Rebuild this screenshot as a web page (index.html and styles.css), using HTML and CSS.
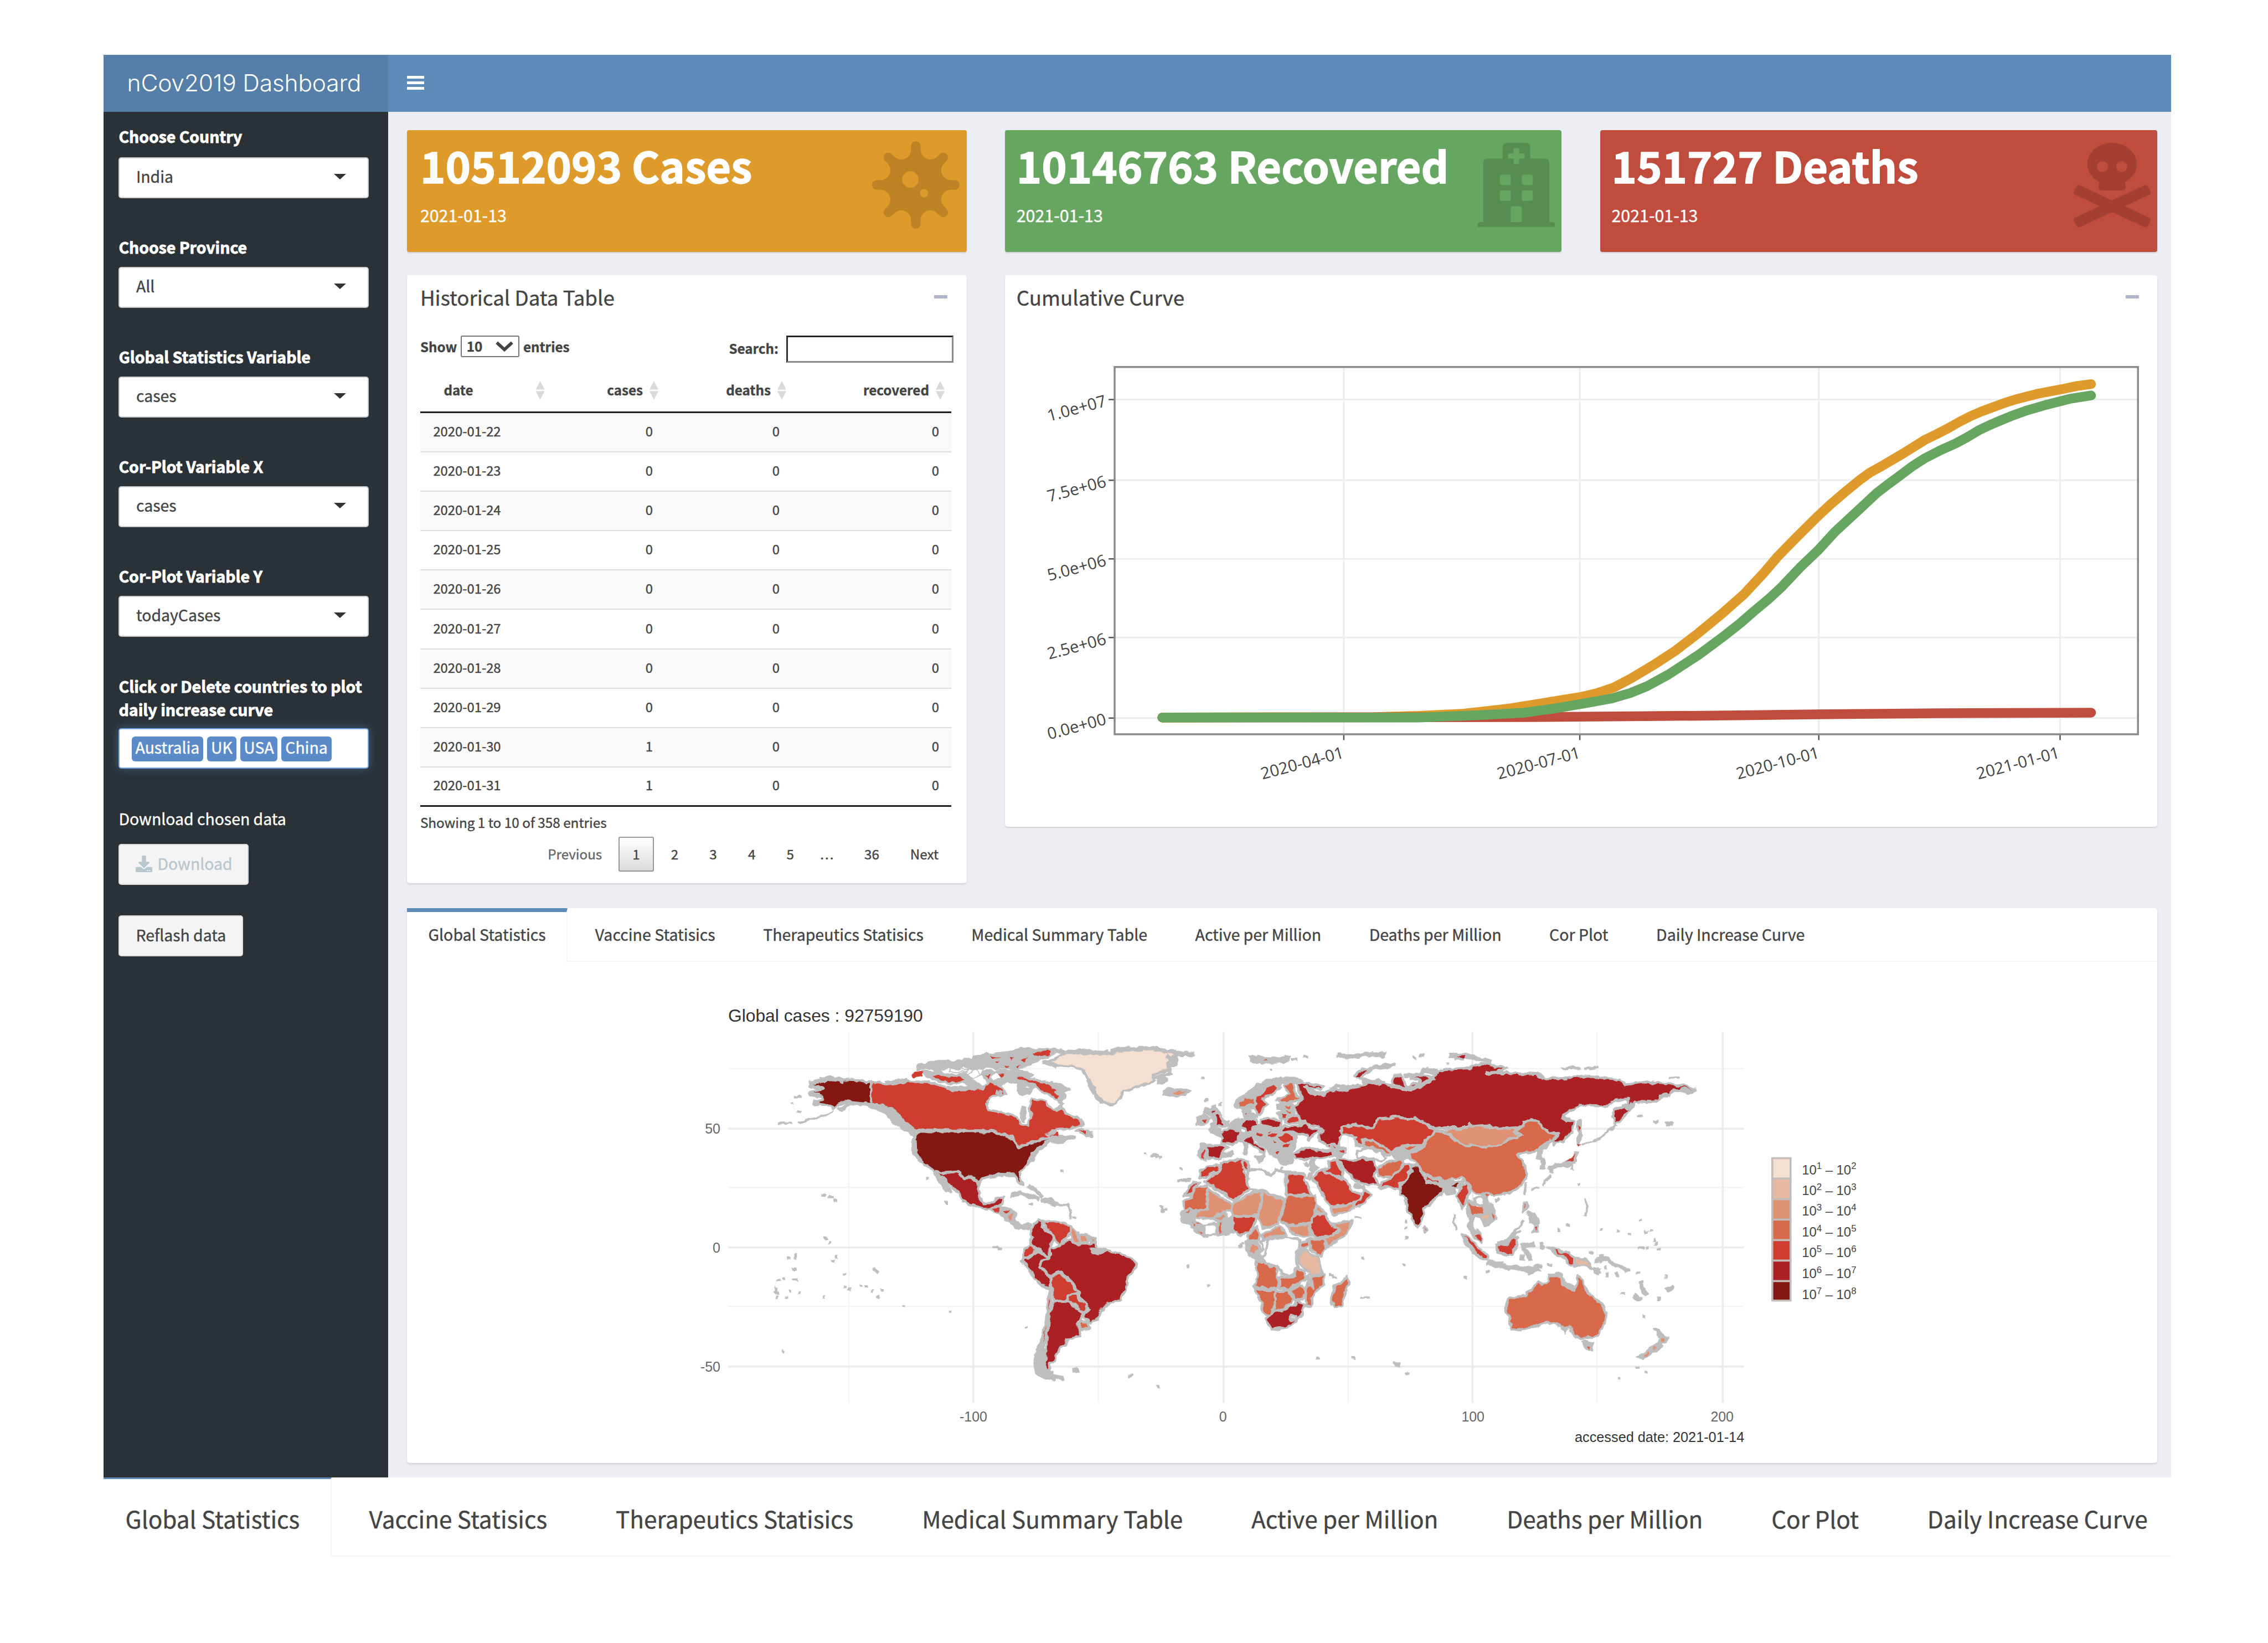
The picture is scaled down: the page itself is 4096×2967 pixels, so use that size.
FILE: index.html
```html
<!DOCTYPE html>
<html lang="en">
<head>
<meta charset="utf-8">
<title>nCov2019 Dashboard</title>
<link rel="stylesheet" href="styles.css">
</head>
<body>
<div class="app">
  <header class="topbar">
    <div class="logo">nCov2019 Dashboard</div>
    <div class="toggle"><i></i><i></i><i></i></div>
  </header>
  <div class="main">
    <aside class="sidebar">
      <div class="field"><label>Choose Country</label><div class="select">India</div></div>
      <div class="field"><label>Choose Province</label><div class="select">All</div></div>
      <div class="field"><label>Global Statistics Variable</label><div class="select">cases</div></div>
      <div class="field"><label>Cor-Plot Variable X</label><div class="select">cases</div></div>
      <div class="field"><label>Cor-Plot Variable Y</label><div class="select">todayCases</div></div>
      <div class="field multi"><label>Click or Delete countries to plot daily increase curve</label>
        <div class="tags"><span>Australia</span><span>UK</span><span>USA</span><span>China</span></div></div>
      <p class="hint">Download chosen data</p>
      <div class="btn muted"><svg viewBox="0 0 512 512"><path d="M216 0h80c13.300 0 24 10.700 24 24v168h87.700c17.800 0 26.700 21.500 14.100 34.100L269.700 378.300c-7.500 7.500-19.800 7.500-27.300 0L90.100 226.100c-12.600-12.600-3.700-34.100 14.100-34.100H192V24c0-13.300 10.700-24 24-24zm296 376v112c0 13.300-10.700 24-24 24H24c-13.300 0-24-10.700-24-24V376c0-13.300 10.700-24 24-24h146.700l49 49c20.100 20.100 52.500 20.100 72.600 0l49-49H488c13.300 0 24 10.700 24 24zm-124 88c0-11-9-20-20-20s-20 9-20 20 9 20 20 20 20-9 20-20zm64 0c0-11-9-20-20-20s-20 9-20 20 9 20 20 20 20-9 20-20z"/></svg>Download</div>
      <div class="btn">Reflash data</div>
    </aside>
    <main class="content">
      <div class="row boxes">
        <section class="box orange"><div><h3>10512093 Cases</h3><p>2021-01-13</p></div>
          <svg viewBox="0 0 512 512"><path d="M483.550 227.550H462c-50.680 0-76.070-61.270-40.230-97.110L437 115.190A28.440 28.440 0 0 0 396.800 75L381.560 90.220c-35.840 35.830-97.110 10.450-97.110-40.230V28.440a28.450 28.450 0 0 0-56.900 0V50c0 50.680-61.270 76.060-97.110 40.230L115.200 75A28.440 28.440 0 0 0 75 115.190l15.250 15.250c35.840 35.840 10.450 97.110-40.230 97.110H28.450a28.450 28.450 0 1 0 0 56.890H50c50.680 0 76.070 61.280 40.230 97.120L75 396.800A28.450 28.450 0 0 0 115.200 437l15.240-15.250c35.840-35.840 97.110-10.450 97.110 40.230v21.540a28.450 28.450 0 0 0 56.900 0V462c0-50.680 61.270-76.070 97.110-40.230L396.800 437A28.450 28.450 0 0 0 437 396.800l-15.250-15.240c-35.840-35.840-10.450-97.120 40.230-97.120h21.540a28.450 28.450 0 1 0 0-56.890ZM224 272a48 48 0 1 1 48-48A48 48 0 0 1 224 272Zm80 56a24 24 0 1 1 24-24A24 24 0 0 1 304 328Z"/></svg></section>
        <section class="box green"><div><h3>10146763 Recovered</h3><p>2021-01-13</p></div>
          <svg class="narrow" viewBox="0 0 448 512" preserveAspectRatio="none"><path d="M448 492v20H0v-20c0-6.627 5.373-12 12-12h20V120c0-13.255 10.745-24 24-24h88V24c0-13.255 10.745-24 24-24h112c13.255 0 24 10.745 24 24v72h88c13.255 0 24 10.745 24 24v360h20c6.627 0 12 5.373 12 12zM308 192h-40c-6.627 0-12 5.373-12 12v40c0 6.627 5.373 12 12 12h40c6.627 0 12-5.373 12-12v-40c0-6.627-5.373-12-12-12zm-168 64h40c6.627 0 12-5.373 12-12v-40c0-6.627-5.373-12-12-12h-40c-6.627 0-12 5.373-12 12v40c0 6.627 5.373 12 12 12zm104 128h-40c-6.627 0-12 5.373-12 12v84h64v-84c0-6.627-5.373-12-12-12zm64-96h-40c-6.627 0-12 5.373-12 12v40c0 6.627 5.373 12 12 12h40c6.627 0 12-5.373 12-12v-40c0-6.627-5.373-12-12-12zm-116 12c0-6.627-5.373-12-12-12h-40c-6.627 0-12 5.373-12 12v40c0 6.627 5.373 12 12 12h40c6.627 0 12-5.373 12-12v-40zM182 96h26v26a6 6 0 0 0 6 6h20a6 6 0 0 0 6-6V96h26a6 6 0 0 0 6-6V70a6 6 0 0 0-6-6h-26V38a6 6 0 0 0-6-6h-20a6 6 0 0 0-6 6v26h-26a6 6 0 0 0-6 6v20a6 6 0 0 0 6 6z"/></svg></section>
        <section class="box red"><div><h3>151727 Deaths</h3><p>2021-01-13</p></div>
          <svg class="narrow" viewBox="0 0 448 512" preserveAspectRatio="none"><path d="M439.150 453.060L297.170 384l141.990-69.060c7.900-3.950 11.110-13.560 7.150-21.460L432 264.850c-3.950-7.900-13.560-11.110-21.470-7.160L224 348.410 37.470 257.690c-7.900-3.950-17.510-.75-21.470 7.160L1.690 293.480c-3.950 7.900-.75 17.510 7.150 21.460L150.830 384 8.850 453.060c-7.900 3.950-11.110 13.560-7.150 21.470l14.310 28.630c3.950 7.900 13.560 11.110 21.470 7.150L224 419.590l186.530 90.720c7.900 3.950 17.510.75 21.470-7.150l14.310-28.630c3.950-7.910.74-17.520-7.160-21.470zM150 237.280l-5.480 25.870c-2.670 12.620 5.420 24.850 16.450 24.850h126.080c11.030 0 19.120-12.230 16.450-24.850l-5.500-25.870c41.780-22.410 70-62.750 70-109.280C368 57.310 303.530 0 224 0S80 57.310 80 128c0 46.530 28.210 86.870 70 109.280zM280 112c17.650 0 32 14.350 32 32s-14.350 32-32 32-32-14.350-32-32 14.350-32 32-32zm-112 0c17.650 0 32 14.350 32 32s-14.350 32-32 32-32-14.350-32-32 14.350-32 32-32z"/></svg></section>
      </div>
      <div class="row panels">
        <section class="card history">
          <div class="card-head"><h4>Historical Data Table</h4><i class="minus"></i></div>
          <div class="controls">
            <div class="length">Show <span class="count">10<svg viewBox="0 0 30 20"><path d="M3 4L15 15L27 4"/></svg></span> entries</div>
            <div class="search">Search:<span></span></div>
          </div>
          <table>
            <colgroup><col class="c1"><col class="c2"><col class="c3"><col class="c4"></colgroup>
            <thead><tr><th>date<i></i></th><th>cases<i></i></th><th>deaths<i></i></th><th>recovered<i></i></th></tr></thead>
            <tbody>
              <tr><td>2020-01-22</td><td>0</td><td>0</td><td>0</td></tr>
              <tr><td>2020-01-23</td><td>0</td><td>0</td><td>0</td></tr>
              <tr><td>2020-01-24</td><td>0</td><td>0</td><td>0</td></tr>
              <tr><td>2020-01-25</td><td>0</td><td>0</td><td>0</td></tr>
              <tr><td>2020-01-26</td><td>0</td><td>0</td><td>0</td></tr>
              <tr><td>2020-01-27</td><td>0</td><td>0</td><td>0</td></tr>
              <tr><td>2020-01-28</td><td>0</td><td>0</td><td>0</td></tr>
              <tr><td>2020-01-29</td><td>0</td><td>0</td><td>0</td></tr>
              <tr><td>2020-01-30</td><td>1</td><td>0</td><td>0</td></tr>
              <tr><td>2020-01-31</td><td>1</td><td>0</td><td>0</td></tr>
            </tbody>
          </table>
          <div class="info">Showing 1 to 10 of 358 entries</div>
          <div class="pager"><span class="prev">Previous</span><span class="cur">1</span><span>2</span><span>3</span><span>4</span><span>5</span><span class="dots">...</span><span class="last">36</span><span class="next">Next</span></div>
        </section>
        <section class="card curve">
          <div class="card-head"><h4>Cumulative Curve</h4><i class="minus"></i></div>
          <svg class="chart" viewBox="2585.4 850 2963.6 1276.5">
            <g transform="matrix(1.9452 0 0 .8291 2560 850)">
              <path class="grid" d="M158 214H1511M158 464H1511M158 708H1511M158 952H1511M158 1202H1511M461 113V1252M773 113V1252M1089 113V1252M1408 113V1252"/>
              <path class="tick" d="M150 214H158M150 464H158M150 708H158M150 952H158M150 1202H158M461 1252V1270M773 1252V1270M1089 1252V1270M1408 1252V1270"/>
              <rect class="frame" x="158" y="113" width="1353" height="1139"/>
              <polyline class="line o" points="221,1200 500,1199 560,1195 620,1188 680,1172 720,1157 773,1137 795,1125 818,1107 840,1080 870,1038 900,992 930,938 960,880 990,818 1015,755 1035,700 1060,640 1089,573 1105,538 1123,502 1145,460 1157,440 1170,423 1200,382 1230,338 1245,321 1260,303 1275,283 1290,265 1305,250 1320,237 1335,224 1350,213 1380,195 1410,182 1430,172 1449,166"/>
              <polyline class="line r" points="221,1200 700,1199 860,1196 1000,1193 1100,1190 1250,1187 1449,1185"/>
              <polyline class="line g" points="221,1200 560,1200 640,1193 700,1185 740,1172 790,1152 815,1141 840,1124 862,1103 890,1067 930,1006 965,945 985,908 1003,871 1022,834 1040,795 1052,765 1065,733 1089,679 1110,625 1140,560 1165,505 1180,478 1195,452 1212,422 1230,395 1250,371 1270,350 1285,331 1300,310 1315,293 1330,278 1348,261 1365,247 1390,230 1420,212 1449,201"/>
            </g>
            <g class="axis">
              <text transform="translate(2848 1044) rotate(-15)">1.0e+07</text>
              <text transform="translate(2848 1251) rotate(-15)">7.5e+06</text>
              <text transform="translate(2848 1454) rotate(-15)">5.0e+06</text>
              <text transform="translate(2848 1656) rotate(-15)">2.5e+06</text>
              <text transform="translate(2848 1862) rotate(-15)">0.0e+00</text>
              <text transform="translate(3459 1948) rotate(-15)">2020-04-01</text>
              <text transform="translate(4067 1948) rotate(-15)">2020-07-01</text>
              <text transform="translate(4682 1948) rotate(-15)">2020-10-01</text>
              <text transform="translate(5300 1948) rotate(-15)">2021-01-01</text>
            </g>
          </svg>
        </section>
      </div>
      <section class="card tabs-card">
        <nav class="tabs"><a class="active">Global Statistics</a><a>Vaccine Statisics</a><a>Therapeutics Statisics</a><a>Medical Summary Table</a><a>Active per Million</a><a>Deaths per Million</a><a>Cor Plot</a><a>Daily Increase Curve</a></nav>
        <svg class="map" viewBox="1047.2 2473.6 4501.8 1289">
          <defs>
            <filter id="rough" filterUnits="userSpaceOnUse" x="1850" y="2640" width="2700" height="1000" color-interpolation-filters="sRGB">
              <feTurbulence type="fractalNoise" baseFrequency=".055" numOctaves="2" seed="4" result="n"/>
              <feDisplacementMap in="SourceGraphic" in2="n" scale="13" xChannelSelector="R" yChannelSelector="G"/>
            </filter>
          </defs>
          <path class="g-minor" d="M2183.800 2654V3608M2825.500 2654V3608M3467.900 2654V3608M4108 2654V3608M1873.700 2748H4486M1873.700 3053.600H4486M1873.700 3359.700H4486"/>
          <path class="g-major" d="M2503.800 2654V3608M3147.300 2654V3608M3787.700 2654V3608M4431.600 2654V3608M1873.700 2902.800H4486M1873.700 3208.200H4486M1873.700 3514.300H4486"/>
          <g filter="url(#rough)">
          <!-- Americas -->
          <g class="land" transform="matrix(.8291 0 0 .7653 1780 2550)">
            <path class="n" d="M455,392 490,374 550,378 590,384 612,398 640,425 690,468 702,485 690,488 655,462 625,440 600,405 550,384 490,378 462,402Z"/>
            <path class="l" d="M268,443 312,441M328,439 370,430 410,416 440,402"/>
            <path class="n" d="M700,250 730,243 778,230 800,236 790,245 868,224 880,216 920,212 970,205 1020,193 1060,196 1150,195 1165,202 1120,207 1100,218 1060,236 1030,252 1010,262 980,252 950,258 915,250 880,262 840,252 820,262 790,256 760,266 740,256 700,262Z"/>
            <path class="n" d="M715,268 770,270 800,282 850,278 870,300 900,318 880,322 845,305 800,308 760,300 730,285Z"/>
            <path class="n" d="M905,262 940,270 975,262 1040,272 1060,282 1020,285 1000,305 975,300 945,318 915,300 900,280Z"/>
            <path class="k" d="M925,285 945,270 960,290 935,305Z"/>
            <path class="n" d="M1010,315 1040,308 1060,325 1040,345 1020,345Z"/>
            <path class="k" d="M1025,320 1040,318 1045,330Z"/>
            <path class="k" d="M855,280 880,262 895,282 870,292Z"/>
            <path class="k" d="M800,258 850,264 870,258 850,272 800,270Z"/>
            <path class="f5 b" d="M682,278 698,267 718,270 712,284 690,288ZM748,288 770,282 800,292 830,282 844,300 800,304 765,298ZM1058,207 1112,200 1114,210 1062,216ZM1018,232 1042,222 1030,238ZM925,214 962,222 930,222ZM910,280 925,278 918,290ZM950,280 970,276 960,288ZM940,236 958,238 948,244ZM985,225 1000,222 994,232ZM968,250 982,248 975,256ZM1002,252 1016,250 1010,258ZM1000,284 1020,282 1012,296Z"/>
            <path class="f1" d="M1090,237 1125,228 1152,208 1220,207 1290,209 1345,195 1420,191 1500,205 1492,222 1475,245 1482,258 1460,270 1430,280 1432,302 1395,315 1365,328 1338,336 1322,368 1308,380 1272,372 1255,350 1248,320 1225,290 1210,262 1190,252 1150,249 1105,244Z"/>
            <path class="l w" d="M1492,208 1558,209M1498,212 1505,235 1480,252 1485,275 1440,290 1470,298 1440,308M1470,215 1500,240M1228,295 1250,345 1272,372M1090,237 1130,248M1120,200 1220,203 1290,208M1300,196 1345,194 1420,191 1500,203"/>
            <path class="f7" d="M556,303 556,378 520,375 480,370 455,378 438,394 428,384 395,378 380,372 405,362 406,352 375,348 362,340 385,333 405,328 395,320 372,314 362,308 395,300 430,293 470,297 520,299Z"/>
            <path class="l w" d="M362,315 395,322M360,345 395,350M375,372 395,378M395,298 430,293 470,297"/>
            <path class="f5" d="M556,303 600,311 665,303 730,303 790,322 825,326 860,318 905,322 925,302 945,315 968,330 975,345 950,347 930,355 912,375 920,398 960,405 1005,418 1020,448 1040,452 1052,422 1045,390 1055,362 1098,365 1105,385 1128,400 1145,388 1165,410 1200,430 1212,445 1190,452 1170,460 1130,462 1100,480 1130,470 1140,488 1120,492 1090,495 1060,505 1010,522 1000,495 960,475 915,467 700,467 680,455 650,425 620,395 590,380 556,378Z"/>
            <path class="f5" d="M995,290 1015,278 1045,288 1075,300 1108,308 1120,322 1145,330 1165,332 1145,345 1135,362 1110,350 1085,335 1060,315 1030,300Z"/>
            <path class="l w" d="M1110,308 1168,328 1135,338 1155,352 1140,362 1150,382M1030,385 1028,440M995,300 1035,310 1010,330M1205,430 1215,450M790,322 825,326 905,322M1128,400 1150,385M945,335 965,345M600,308 665,300"/>
            <path class="n" d="M1190,468 1210,460 1240,474 1238,488 1220,480Z"/>
            <path class="n" d="M1105,488 1145,485 1185,492 1150,505 1120,508Z"/>
            <path class="f5 b" d="M1125,475 1138,470 1136,488ZM1200,468 1220,464 1222,476Z"/>
            <path class="f7" d="M706,470 915,470 960,478 1000,500 1010,525 1060,508 1095,497 1115,485 1122,492 1100,515 1080,525 1055,545 1050,575 1020,602 1016,620 1026,650 1014,645 1000,614 960,614 925,622 900,628 888,645 875,625 860,618 845,627 825,603 775,608 742,595 712,575 690,540 688,500 694,480Z"/>
            <path class="l w" d="M925,622 960,616 1000,616M1122,492 1085,522 1058,545 1052,575M688,500 690,540 715,578"/>
            <path class="f6" d="M750,602 775,610 825,605 845,628 860,622 888,648 892,690 905,712 935,710 950,692 970,690 962,712 945,722 925,732 905,728 860,715 836,700 830,680 800,650 778,622 790,650 802,672 790,668 768,640Z"/>
            <path class="l w" d="M757,612 798,668"/>
            <path class="n" d="M925,732 950,722 990,732 1006,745 1002,772 1022,785 1050,782 1045,796 1015,798 985,775 960,750Z"/>
            <path class="b f5" d="M935,730 952,727 952,743 940,742ZM965,738 985,736 975,746Z"/><path class="b f3" d="M982,752 995,745 998,762 988,768Z"/>
            <path class="l w" d="M990,685 1020,678 1055,690 1078,698M1085,704 1100,700 1135,716M1040,650 1060,665 1092,690"/>
            <path class="l" d="M1135,714 1165,716 1178,735 1176,768M1042,712 1060,716"/>
            <path class="f6" d="M1060,782 1078,768 1090,772 1085,790 1098,802 1120,815 1124,840 1110,852 1110,895 1080,870 1055,855 1050,845 1055,820 1052,800Z"/>
            <path class="f5" d="M1090,775 1110,768 1150,778 1175,788 1172,812 1160,830 1140,855 1130,835 1125,818 1100,800Z"/>
            <path class="f3" d="M1175,790 1195,808 1202,845 1186,842 1172,815ZM1202,818 1226,815 1228,842 1204,845ZM1228,815 1252,830 1240,846Z"/>
            <path class="f5" d="M1030,865 1050,852 1066,870 1045,893 1028,890Z"/>
            <path class="f6" d="M1028,895 1045,895 1070,870 1110,898 1085,905 1078,930 1110,948 1115,980 1108,1000 1080,985 1060,960 1045,930 1024,905Z"/>
            <path class="f6" d="M1110,898 1110,860 1140,855 1175,832 1190,848 1235,848 1250,840 1258,865 1245,880 1285,868 1330,882 1360,892 1380,915 1375,935 1350,965 1345,1000 1330,1035 1290,1050 1268,1075 1265,1090 1240,1115 1210,1095 1232,1068 1215,1045 1200,1010 1175,975 1145,942 1115,955 1080,930 1085,905Z"/>
            <path class="n" d="M1240,862 1262,868 1285,872 1262,882 1245,880Z"/>
            <path class="f5" d="M1115,955 1140,942 1150,960 1175,975 1198,1010 1170,1020 1160,1037 1125,1042 1115,1000Z"/>
            <path class="f5" d="M1168,1020 1195,1015 1205,1038 1225,1052 1220,1078 1202,1072 1190,1050 1166,1040Z"/>
            <path class="f4" d="M1203,1105 1230,1115 1232,1132 1205,1136Z"/>
            <path class="f6" d="M1125,1042 1168,1042 1200,1072 1215,1080 1198,1110 1200,1138 1205,1160 1165,1168 1160,1190 1142,1195 1130,1225 1130,1240 1110,1250 1105,1272 1090,1270 1098,1240 1100,1180 1105,1120 1110,1080Z"/>
            <path class="f5" d="M1108,1003 1116,1042 1108,1080 1100,1150 1090,1190 1084,1180 1098,1110 1105,1040Z"/>
            <path class="n" d="M1082,1180 1093,1200 1092,1250 1100,1275 1118,1278 1125,1305 1095,1300 1070,1280 1063,1240 1072,1200Z"/>
            <path class="l w" d="M1118,1290 1152,1298M1180,1273 1200,1271"/>
            <path class="n" d="M1462,332 1478,326 1500,330 1530,328 1545,336 1520,348 1500,352 1465,345Z"/><path class="b f3" d="M1488,340 1515,334 1532,339 1505,347Z"/>
            <path class="dot" d="M405,685h8M428,690h8M443,702h4M414,829h2M428,843v3M320,883v10M299,898h1M447,895h1M440,905v3M315,930h5M568,933l6,8M474,950h1M268,972h3M284,965h1M314,970h10M474,990h2M489,1000h2M523,988h2M541,990h2M559,1003v4M591,1006h3M263,998v8M260,1013h8M264,1024v3M292,1028h1M333,1012h1M301,1008h1M410,1028v2M575,1027h1M655,1055h2M803,1077h1M1037,1127h1M283,1212h1M938,862h8M950,865h6M1357,1292h10M1445,1327v2M1538,923h1M1147,600v2M1405,545h2M1428,551h6M1440,552h4M1455,558h1M1515,598h2M1512,634h6M1528,636h4M1540,632h5M1455,725l8,14M732,627v3M788,709h2M309,377h1M330,405h3M320,353h18M1185,760v2"/>
          </g>
          <!-- Europe, Africa and Asia -->
          <g class="land" transform="matrix(.6378 0 0 .6378 2950 2600)">
            <path class="f6" d="M612,290 650,292 715,305 700,318 665,310 640,308 655,322 680,338 720,332 742,318 800,318 850,300 930,288 985,300 998,262 1030,256 1040,290 1050,308 1075,290 1100,300 1105,282 1065,272 1095,262 1150,265 1200,235 1300,230 1345,212 1400,220 1450,228 1435,240 1370,250 1450,250 1572,255 1620,274 1704,270 1752,262 1812,267 1908,276 1932,297 2016,285 2124,297 2184,305 2218,319 2184,333 2136,316 2108,330 2100,345 2064,356 2028,370 1968,366 1956,391 1926,425 1890,457 1878,425 1884,402 1938,374 1944,351 1896,362 1848,385 1752,380 1704,402 1678,428 1722,448 1716,483 1680,523 1644,538 1638,523 1662,495 1620,489 1590,466 1578,443 1548,439 1518,454 1500,472 1440,475 1380,462 1330,465 1300,457 1290,470 1200,470 1165,478 1110,445 1080,432 1050,440 1010,422 975,430 930,435 915,465 880,472 840,457 785,468 780,480 800,490 775,510 778,540 740,545 700,525 695,512 712,482 690,465 640,450 612,430 605,410 595,390 628,350 612,325Z"/>
            <path class="l w" d="M740,318 770,300 800,310 860,300M870,290 930,284 960,290M985,300 1050,315 1100,305 1140,280 1160,265M1040,262 1100,258 1120,240 1180,248M640,305 680,335 720,332M2064,345 2100,340M1960,372 1930,395M1674,425 1700,440M1370,250 1440,242M1572,255 1605,270M2150,318 2200,325"/>
            <path class="n" d="M835,262 870,236 920,224 1002,213 1000,218 930,232 885,248 862,268 910,282 880,280Z"/><path class="b f6" d="M842,264 870,244 884,240 860,266Z"/>
            <path class="n" d="M415,185 450,182 490,190 580,183 575,195 555,208 490,206 470,214 420,198Z"/><path class="b f4" d="M470,200 482,190 490,200Z"/>
            <path class="l w" d="M765,181 840,182 880,176 965,176M1218,178 1260,178 1320,188 1390,206M1240,188 1280,190"/><path class="b f6" d="M1255,182 1285,180 1280,192Z"/><path class="dot" d="M590,195h14M630,184h16M1080,188h3M1106,177h10M1130,230v4M1160,238h12M1210,212v1"/>
            <path class="f5" d="M785,470 840,457 880,472 915,466 930,436 975,431 1010,423 1050,440 1080,433 1110,446 1165,480 1150,500 1120,520 1112,545 1050,540 1012,558 990,575 950,545 900,520 870,518 870,545 845,540 835,520 845,508 790,495Z"/>
            <path class="f4" d="M872,518 900,520 950,545 985,570 980,582 940,562 900,548 875,545Z"/>
            <path class="f0" d="M848,562 895,552 940,568 970,590 948,606 900,594 850,590Z"/>
            <path class="n" d="M985,572 1015,550 1050,540 1110,545 1075,565 1055,592 1005,592Z"/><path class="b f4" d="M1040,548 1090,546 1060,560Z"/>
            <path class="f4" d="M1062,575 1120,545 1130,520 1165,485 1190,490 1218,500 1240,520 1280,540 1370,550 1430,540 1450,520 1515,500 1482,485 1512,472 1520,450 1548,440 1578,443 1595,468 1620,490 1660,497 1640,522 1615,540 1590,552 1550,572 1520,568 1492,580 1512,598 1528,630 1534,667 1512,700 1480,725 1430,740 1400,745 1370,732 1340,740 1312,728 1295,695 1270,672 1200,682 1150,668 1112,650 1095,620 1062,595Z"/>
            <path class="f3" d="M1170,487 1220,478 1290,472 1300,457 1330,465 1380,467 1440,475 1505,472 1480,488 1515,500 1450,520 1430,540 1370,550 1280,540 1238,515 1218,495Z"/>
            <path class="f4" d="M925,635 985,605 1030,600 1040,615 1015,650 985,668 935,668Z"/>
            <path class="f5" d="M935,710 985,668 1018,648 1040,612 1080,625 1055,655 1048,680 1020,695 1020,720 985,712Z"/>
            <path class="f7" d="M1065,628 1095,620 1112,660 1128,688 1195,710 1192,735 1150,770 1115,800 1110,850 1090,872 1070,840 1050,800 1045,752 1022,745 1025,700 1050,680 1055,655 1070,645Z"/>
            <path class="f5" d="M1120,665 1190,688 1182,700 1125,684Z"/>
            <path class="n" d="M1190,690 1235,688 1240,735 1205,742 1195,712Z"/>
            <path class="f7" d="M1215,712 1240,695 1278,683 1255,715 1240,712Z"/>
            <path class="f5" d="M1250,745 1275,700 1292,690 1302,730 1285,770 1270,797 1258,765Z"/>
            <path class="f6" d="M765,585 795,597 830,608 870,592 915,605 925,640 915,665 938,702 890,697 850,690 820,660 795,640 780,610Z"/>
            <path class="f5" d="M735,605 765,600 790,650 792,675 750,662 708,640 735,630Z"/>
            <path class="f5" d="M668,672 700,640 750,662 795,680 830,725 866,740 860,760 810,780 738,785 710,745Z"/>
            <path class="f3" d="M742,795 835,775 838,797 755,825Z"/>
            <path class="f5" d="M868,745 875,722 908,738 880,775 842,790 840,768 862,760Z"/>
            <path class="l w" d="M672,600 668,648 690,625M835,700 868,712 880,705M662,655 650,680M870,712 880,730"/>
            <path class="f4" d="M1114,875 1122,868 1132,885 1120,893Z"/>
            <path class="f5" d="M213,670 216,650 242,625 292,622 292,645 240,665Z"/>
            <path class="f5" d="M150,742 190,690 215,692 185,720 180,742Z"/>
            <path class="f5" d="M230,688 295,645 300,615 340,602 392,600 395,650 412,722 350,762Z"/>
            <path class="f5" d="M388,605 412,600 413,640 400,642 388,630Z"/>
            <path class="f0" d="M408,650 420,638 450,640 505,662 520,640 560,652 560,758 465,725 412,722Z"/>
            <path class="f5" d="M565,652 628,657 640,665 636,680 667,742 565,742Z"/>
            <path class="f4" d="M148,765 180,748 190,712 243,705 246,800 175,807 150,800Z"/>
            <path class="f3" d="M246,715 350,782 345,805 290,815 260,842 200,830 190,808 246,800Z"/>
            <path class="f3" d="M350,772 430,730 465,732 465,760 448,825 350,827 340,808Z"/>
            <path class="f3" d="M466,728 553,765 540,820 530,857 470,878 450,822 466,770Z"/>
            <path class="f4" d="M560,745 677,745 686,770 670,850 600,862 545,855 540,825 555,785Z"/>
            <path class="f3" d="M678,808 690,785 725,820 695,815Z"/>
            <path class="f5" d="M655,862 682,820 720,820 745,865 778,882 722,912 670,908Z"/>
            <path class="f3" d="M748,862 828,842 805,900 730,955 720,918 780,885Z"/>
            <path class="f3" d="M560,862 600,865 650,862 662,908 600,905Z"/>
            <path class="f3" d="M460,905 530,868 568,900 500,912 470,920Z"/>
            <path class="n" d="M312,850 345,828 345,895 312,900ZM140,805 180,800 200,845 235,880 235,908 205,895 175,860 142,848Z"/>
            <path class="b f4" d="M150,812 175,805 165,815ZM200,850 220,862 205,862ZM180,852 195,865 190,875ZM205,885 225,895 222,903Z"/>
            <path class="f3" d="M262,842 308,815 330,835 290,850Z"/>
            <path class="f0" d="M232,862 282,858 280,902 238,908Z"/><path class="f4" d="M285,850 306,850 306,898 286,902Z"/>
            <path class="f5" d="M350,830 446,828 430,872 395,903 375,902 345,882Z"/>
            <path class="f4" d="M410,905 445,870 456,922 415,927Z"/>
            <path class="n" d="M400,930 450,928 462,1002 440,1005 405,970Z"/><path class="b f3" d="M415,945 428,938 445,955 435,975 415,970Z"/>
            <path class="f0" d="M462,930 492,918 478,980 462,992 450,975 470,960Z"/>
            <path class="f0" d="M490,922 560,910 622,925 608,960 602,1010 612,1038 592,1062 545,1062 528,1030 485,1022 465,1000 485,960Z"/>
            <path class="f4" d="M616,940 655,920 655,950 620,962Z"/>
            <path class="n" d="M605,965 625,965 612,1020 602,1000Z"/>
            <path class="f4" d="M658,920 718,918 722,960 702,990 660,960Z"/>
            <path class="f2" d="M610,990 640,962 692,995 706,1058 670,1068 620,1022Z"/>
            <path class="f4" d="M440,1012 475,1012 490,1030 525,1025 530,1118 432,1115 447,1060Z"/>
            <path class="f4" d="M533,1075 592,1068 600,1036 638,1050 638,1085 602,1100 575,1125 533,1118Z"/>
            <path class="f4" d="M664,1072 716,1060 716,1102 680,1132 665,1160 665,1190 638,1192 645,1095 670,1115Z"/>
            <path class="l w" d="M648,1060 660,1112"/>
            <path class="f4" d="M433,1122 522,1125 515,1190 500,1228 470,1220 455,1160Z"/>
            <path class="f4" d="M522,1130 572,1130 592,1162 548,1207 510,1205Z"/>
            <path class="f4" d="M578,1125 612,1103 640,1120 632,1160 602,1168Z"/>
            <path class="f6" d="M482,1235 520,1210 560,1202 610,1170 630,1182 632,1215 600,1257 560,1277 503,1284Z"/>
            <circle class="lesotho" cx="592" cy="1238" r="10"/>
            <path class="f4" d="M755,1110 785,1100 806,1068 813,1095 785,1190 755,1195 745,1170Z"/>
            <path class="n" d="M1295,765 1318,770 1332,795 1362,790 1352,735 1375,735 1372,755 1400,800 1408,830 1380,862 1365,865 1345,830 1318,820 1315,870 1345,900 1350,932 1325,915 1300,870Z"/>
            <path class="f0" d="M1320,758 1350,752 1362,785 1330,780Z"/>
            <path class="b f4" d="M1300,772 1315,785 1358,792 1355,812 1318,822 1300,790ZM1365,740 1376,738 1372,755ZM1392,815 1402,822 1395,838Z"/><path class="b f2" d="M1346,826 1382,824 1368,845Z"/>
            <path class="b f5" d="M1325,902 1345,905 1350,930 1335,922Z"/>
            <path class="n" d="M1268,898 1290,905 1375,990 1368,1005 1330,985 1285,940Z"/><path class="b f5" d="M1282,904 1300,918 1368,990 1366,1000 1335,978Z"/>
            <path class="f5" d="M1408,945 1450,940 1478,905 1498,915 1490,950 1468,985 1420,978Z"/><path class="l w" d="M1412,938 1455,925 1490,892M1372,1015 1440,1030 1500,1040 1560,1052"/>
            <path class="l" d="M1242,822 1238,850 1250,885M1530,690 1522,740"/>
            <path class="dot" d="M223,272h1M500,238h1M236,358h6M298,372v4M22,583h10M38,588h6M54,593h3M137,637h1M128,683h4M145,685h8M165,682h6M55,790l8,4M66,800h12M165,1030h1M250,1107h1M378,940v4M385,935h2M374,950h2M845,832h14M1045,848v2M1043,873h3M1047,912v8M868,998h3M1037,1023h2M868,1155h3M878,1152h14M1283,1068v4M740,1062h6M750,1072h14M688,1403h3M828,1399h4M1000,1422h18M1002,1428h14M1048,1463h4M42,1513h3M1372,1052h2"/>
          </g>
          <!-- European detail -->
          <g class="land" transform="matrix(.33333 0 0 .33333 3060 2750)">
            <path class="n" d="M348,235 400,215 430,190 470,175 510,120 560,98 620,80 700,65 830,68 875,95 840,108 800,104 720,94 700,120 640,115 600,125 560,160 540,190 500,205 500,290 480,300 420,305 370,300 348,270Z"/>
            <path class="b f4" d="M390,270 430,225 490,220 490,260 440,275 415,300 395,295Z"/>
            <path class="f5" d="M505,205 550,195 580,150 650,118 705,140 665,165 640,195 590,205 570,235 600,270 570,300 560,330 525,345 500,310 490,295 510,270Z"/>
            <path class="f4" d="M740,150 735,125 770,100 800,105 820,190 850,220 820,245 770,255 710,262 680,230 740,205 765,190Z"/>
            <path class="n" d="M680,270 720,270 795,272 802,335 770,355 745,385 705,375 680,345 715,330 690,300Z"/>
            <path class="b f4" d="M735,285 775,285 778,305 740,295ZM740,320 778,320 775,340 740,332Z"/><path class="b f5" d="M705,350 750,350 735,372 712,368Z"/>
            <path class="n" d="M410,330 425,310 470,320 465,380 435,385 420,360ZM475,350 520,350 520,370 485,372Z"/><path class="b f5" d="M432,338 444,338 442,355Z"/>
            <path class="n" d="M118,300 150,305 200,280 215,310 235,330 240,370 265,395 295,402 290,430 240,442 165,450 165,420 190,395 160,350 120,330Z"/>
            <path class="b f6" d="M200,350 220,355 255,400 255,432 215,432 218,395ZM170,320 198,320 190,335 175,335Z"/>
            <path class="n" d="M57,378 120,350 155,375 135,412 60,430Z"/><path class="b f5" d="M92,390 130,393 122,410 98,405Z"/>
            <path class="n" d="M305,430 350,385 410,382 405,420 395,445 380,480 310,450ZM150,460 230,465 230,510 180,490Z"/>
            <path class="n" d="M490,450 560,430 700,460 735,490 820,485 835,530 805,600 790,640 802,700 750,735 710,725 680,690 640,660 600,610 540,570 500,530 480,520 440,545 385,560 380,520 400,495 490,490Z"/>
            <path class="f6" d="M405,405 450,385 520,390 525,430 490,440 490,480 440,485 430,460 395,440Z"/>
            <path class="f6" d="M550,390 600,375 705,395 708,450 680,455 600,440 558,430Z"/>
            <path class="f5" d="M740,390 765,370 800,355 850,375 850,415 745,410Z"/>
            <path class="f6" d="M710,465 738,435 840,435 890,420 940,450 1010,470 1000,490 940,510 920,545 910,515 850,510 820,485 770,480 720,490Z"/>
            <path class="n" d="M860,395 900,400 900,415 870,415Z"/>
            <path class="b f5" d="M520,490 562,488 555,508 525,508ZM592,500 630,500 672,490 665,515 620,525 598,518ZM650,545 675,565 652,572ZM665,638 690,635 688,660 672,655ZM710,582 780,570 765,600 715,600ZM600,478 635,480 610,488Z"/>
            <path class="b f5" d="M680,520 740,500 795,520 795,550 740,558 700,545Z"/>
            <path class="f6" d="M230,490 310,450 390,485 370,515 385,560 340,570 300,580 245,575 255,530Z"/>
            <path class="n" d="M405,535 480,520 500,565 585,625 572,650 500,600 465,565 410,565Z"/><path class="b f6" d="M412,545 485,518 490,568 575,622 572,638 500,592 470,562 415,552Z"/>
            <path class="n" d="M500,675 575,665 545,715ZM425,575 445,575 445,650 425,650Z"/>
            <path class="f6" d="M110,578 150,588 250,588 295,603 245,645 240,690 145,690 138,612 115,600Z"/>
            <path class="n" d="M82,575 112,580 130,610 125,690 92,690 75,655Z"/><path class="b f5" d="M98,615 112,615 110,688 98,688Z"/>
            <path class="l w" d="M250,660 310,655 340,635M700,765 715,770M890,712 905,740 920,715"/>
            <path class="f6" d="M798,660 830,635 900,612 980,625 1095,632 1100,670 1040,680 960,688 900,692 830,690Z"/>
            <path class="n" d="M940,700 970,700 962,780 935,780Z"/>
            <path class="n" d="M1055,585 1120,575 1170,610 1205,610 1210,640 1170,665 1105,665 1105,635Z"/><path class="b f5" d="M1072,585 1085,590 1078,605ZM1105,595 1120,610 1105,612ZM1158,622 1200,622 1198,645 1165,640Z"/>
          </g>
          <!-- East Asia and Oceania -->
          <g class="land" transform="matrix(.7653 0 0 .7334 3700 2600)">
            <path class="l w" d="M470,385 476,420 472,468M464,492 458,518 430,535 395,542 372,558M340,490 338,515 352,520 355,548 340,550M345,482 330,495M375,545 378,568M380,455 340,485M390,540 440,540 455,525"/>
            <path class="b f5" d="M472,395 480,410 474,418ZM468,462 484,466 472,474ZM440,518 460,502 452,526 430,532Z"/>
            <path class="l" d="M484,468 540,447 600,402M376,575 352,614M340,618 312,626M494,660 500,690 490,720M293,622 291,640M412,202 440,198 480,200M490,202 540,196M776,235 810,233"/>
            <path class="f5" d="M288,672 298,672 298,692 288,700Z"/>
            <path class="n" d="M300,705 325,712 338,745 332,775 318,772 328,755 308,738Z"/><path class="b f5" d="M322,762 332,760 330,772Z"/>
            <path class="l" d="M256,775 290,735M255,785 275,772"/>
            <path class="l w" d="M278,825 325,815M285,830 300,850 312,878M282,850 280,875M346,808 350,835M345,820 360,835M240,898 300,905 350,895M300,917 345,905M165,880 215,888M375,885 370,895M196,660 200,668"/>
            <path class="f5" d="M372,830 402,834 420,850 440,846 458,862 456,895 442,892 425,868 405,855Z"/>
            <path class="f2" d="M458,862 500,875 522,912 545,915 510,905 490,892 458,892Z"/>
            <path class="l w" d="M525,875 555,870 550,852M558,862 585,885 630,905 636,916M522,905 545,912M520,915 540,918"/>
            <path class="f4" d="M225,1042 235,1010 295,995 335,950 350,960 370,948 372,925 415,930 418,958 460,978 470,930 485,945 500,985 545,1025 565,1055 560,1090 535,1140 490,1148 455,1140 440,1105 425,1118 405,1100 370,1090 310,1110 262,1120 242,1116 240,1080Z"/>
            <path class="l w" d="M370,928 415,926 418,955 455,972M412,1105 435,1125"/>
            <path class="n" d="M485,1158 520,1165 518,1188 502,1190Z"/><path class="b f4" d="M502,1178 515,1178 508,1188Z"/>
            <path class="n" d="M725,1115 740,1122 758,1142 775,1148 760,1166 742,1165 745,1145ZM672,1212 720,1180 740,1165 750,1178 715,1200 685,1222Z"/>
            <path class="b f3" d="M745,1148 758,1148 758,1162 748,1162ZM722,1178 735,1180 722,1190ZM688,1205 705,1195 710,1202 692,1216Z"/>
            <path class="l w" d="M678,948 688,975M655,1000 680,1012M765,980 790,966M686,970 700,998"/>
            <path class="dot" d="M670,368h16M726,388h10M765,396h8M780,397h6M470,605v2M435,750h3M407,766v3M548,768h2M603,772h4M643,783h4M680,735h1M697,775h6M714,770h2M728,800v4M730,815v4M742,835h3M676,832h10M700,833h2M90,930v4M165,915h2M618,990h5M742,1010h2M687,1072h2M668,1252h6M697,1267h2M608,1287h3M763,932v3M563,900v6M566,922v4M594,918h5M596,925h4M510,847h4M670,918h4M450,548v6"/>
          </g>
          </g>
          <g class="maptext">
            <text class="t1" x="1873" y="2627">Global cases : 92759190</text>
            <g class="ax">
              <text class="end" x="1853" y="2915">50</text><text class="end" x="1853" y="3221">0</text><text class="end" x="1853" y="3528">-50</text>
              <text class="mid" x="2504" y="3656">-100</text><text class="mid" x="3146" y="3656">0</text><text class="mid" x="3789" y="3656">100</text><text class="mid" x="4430" y="3656">200</text>
            </g>
            <text class="cap end" x="4487" y="3709">accessed date: 2021-01-14</text>
            <g class="keys">
              <rect class="f1" x="4559" y="2978.500" width="47" height="52.700"/><rect class="f2" x="4559" y="3031.200" width="47" height="52.700"/><rect class="f3" x="4559" y="3083.900" width="47" height="52.700"/><rect class="f4" x="4559" y="3136.600" width="47" height="52.700"/><rect class="f5" x="4559" y="3189.300" width="47" height="52.700"/><rect class="f6" x="4559" y="3242" width="47" height="52.700"/><rect class="f7" x="4559" y="3294.700" width="47" height="50"/>
            </g>
            <g class="kt">
              <text x="4635" y="3020">10<tspan class="s" dy="-13">1</tspan><tspan dy="13"> – 10</tspan><tspan class="s" dy="-13">2</tspan></text>
              <text x="4635" y="3073">10<tspan class="s" dy="-13">2</tspan><tspan dy="13"> – 10</tspan><tspan class="s" dy="-13">3</tspan></text>
              <text x="4635" y="3126">10<tspan class="s" dy="-13">3</tspan><tspan dy="13"> – 10</tspan><tspan class="s" dy="-13">4</tspan></text>
              <text x="4635" y="3180">10<tspan class="s" dy="-13">4</tspan><tspan dy="13"> – 10</tspan><tspan class="s" dy="-13">5</tspan></text>
              <text x="4635" y="3233">10<tspan class="s" dy="-13">5</tspan><tspan dy="13"> – 10</tspan><tspan class="s" dy="-13">6</tspan></text>
              <text x="4635" y="3287">10<tspan class="s" dy="-13">6</tspan><tspan dy="13"> – 10</tspan><tspan class="s" dy="-13">7</tspan></text>
              <text x="4635" y="3341">10<tspan class="s" dy="-13">7</tspan><tspan dy="13"> – 10</tspan><tspan class="s" dy="-13">8</tspan></text>
            </g>
          </g>
        </svg>
      </section>
    </main>
  </div>
  <nav class="tabs strip"><a class="active">Global Statistics</a><a>Vaccine Statisics</a><a>Therapeutics Statisics</a><a>Medical Summary Table</a><a>Active per Million</a><a>Deaths per Million</a><a>Cor Plot</a><a>Daily Increase Curve</a></nav>
</div>
</body>
</html>
```
FILE: styles.css
```css
* { box-sizing: border-box; }
body {
  margin: 0;
  width: 4096px;
  height: 2967px;
  overflow: hidden;
  background: #fff;
  color: #444;
  font-family: "Noto Sans CJK SC", "Noto Sans", sans-serif;
  font-size: 28.4px;
  -webkit-text-stroke: .4px;
}
h3, h4, p { margin: 0; }
svg { display: block; }

.app { width: 3734.4px; margin: 98.8px 0 0 186.6px; }
.topbar { display: flex; height: 103.7px; background: #5d8cb9; }
.logo {
  width: 514.6px;
  padding-left: 43px;
  line-height: 101px;
  background: #557fa8;
  color: #fff;
  font-family: Inter, "Liberation Sans", sans-serif;
  font-weight: 300;
  font-size: 42.6px;
  letter-spacing: -0.25px;
  white-space: nowrap;
  -webkit-text-stroke: 0;
}
.toggle { display: flex; flex-direction: column; gap: 5.4px; width: 30.4px; margin: 38px 0 0 34px; }
.toggle i { height: 4.8px; background: #fff; }

.main { display: flex; height: 2465.900px; }
.sidebar { width: 514.6px; padding: 24px 34.9px 0 27.9px; background: #2a3137; color: #fff; }
.field { height: 198px; }
.field label { display: block; height: 40px; margin-bottom: 17.700px; line-height: 40px; font-weight: 700; white-space: nowrap; -webkit-text-stroke: .9px; }
.field + .field label { line-height: 44px; }
.select {
  display: flex;
  justify-content: space-between;
  align-items: center;
  height: 73.600px;
  padding: 0 39px 6px 29.500px;
  border: 2px solid #ccc;
  border-radius: 5px;
  background: #fff;
  color: #444;
}
.select::after { content: ""; margin-top: 3px; border: 11px solid transparent; border-top: 10px solid #333; border-bottom: 0; }
.multi { height: 232px; padding-top: 1.500px; }
.field.multi label { height: 84px; margin-bottom: 13.500px; line-height: 42px; white-space: normal; margin-right: -20px; font-size: 28.500px; }
.tags {
  display: flex;
  gap: 7px;
  height: 72.200px;
  padding: 13px 0 0 21.300px;
  border: 2px solid #78a7e6;
  border-radius: 5px;
  background: #fff;
  box-shadow: 0 0 18px rgba(90, 140, 200, .5);
}
.tags span { height: 45px; padding: 0 6.800px; border-radius: 6px; background: #5b8ac8; line-height: 37px; }
.hint { margin: 9.500px 0 26.200px; line-height: 40px; }
.btn {
  display: flex;
  align-items: center;
  width: 225px;
  height: 74.300px;
  margin-bottom: 54.500px;
  padding: 0 0 6px 29px;
  border: 2px solid #ddd;
  border-radius: 5px;
  background: #f4f4f4;
  color: #444;
  white-space: nowrap;
}
.btn.muted { width: 234.700px; padding-left: 28px; color: #b8c7ce; }
.btn svg { width: 32px; height: 30px; margin: 3px 8px 0 0; fill: #b8c7ce; }

.content { flex: 1; padding: 32.900px 24.500px 0 34.200px; background: #edeef4; }
.row { display: grid; align-items: start; }
.boxes { grid-template-columns: 1010.300px 1005.200px 1006.500px; column-gap: 69.550px; }
.box {
  display: flex;
  justify-content: space-between;
  height: 219.600px;
  padding: 19.500px 12.500px 0 23.500px;
  border-radius: 4px;
  box-shadow: 0 2px 2px rgba(0, 0, 0, .12);
  color: #fff;
}
.box.green, .box.red { padding-left: 20.500px; }
.box h3 { font-size: 77.200px; line-height: 84px; font-weight: 700; white-space: nowrap; -webkit-text-stroke: 1.500px; }
.box p { margin-top: 27px; font-size: 30.400px; line-height: 44px; }
.box svg { width: 158px; height: 158px; fill: rgba(0, 0, 0, .15); }
.box svg.narrow { width: 139px; height: 152.500px; margin-top: 3px; }
.orange { background: #de9b2b; }
.green { background: #67a660; }
.red { background: #c04c3d; }

.card { border-radius: 5px; background: #fff; box-shadow: 0 2px 3px rgba(0, 0, 0, .12); }
.panels { grid-template-columns: 1010.300px 2081.200px; column-gap: 69.600px; margin-top: 42.300px; height: 1143px; }
.card-head { display: flex; justify-content: space-between; padding: 14px 35px 0 23.500px; height: 99.600px; }
.curve .card-head { padding: 14px 33.500px 0 20.500px; }
.card-head h4 { font-size: 36.700px; font-weight: 400; line-height: 50px; }
.minus { width: 24px; height: 6px; margin-top: 22px; background: #b0b7c8; }
.history { height: 1098.200px; font-size: 24.200px; }
.history > :not(.card-head) { margin-left: 23.500px; width: 959.100px; }
.controls { display: flex; justify-content: space-between; height: 48.800px; margin-top: 9.600px; font-weight: 700; }
.controls div { display: flex; white-space: nowrap; }
.length { line-height: 40px; gap: 6.500px; }
.count {
  display: flex;
  align-items: center;
  gap: 22px;
  width: 106.600px;
  height: 38.700px;
  padding: 0 0 1px 9px;
  border: 2px solid #777;
  border-radius: 3px;
}
.count svg { width: 36px; height: 23px; fill: none; stroke: #444; stroke-width: 5; }
.search { line-height: 46px; margin-right: -4px; }
.search span { width: 302px; height: 48.800px; margin-left: 14px; border: 3px solid #888; border-top-color: #222; border-left-color: #333; }
table { border-collapse: separate; border-spacing: 0; table-layout: fixed; }
.c1 { width: 239.100px; }
.c2 { width: 203px; }
.c3 { width: 231px; }
.c4 { width: 286px; }
th, td { padding: 0; line-height: 34px; text-align: right; }
th { height: 91px; padding: 10px 12px 0 0; border-bottom: 3px solid #1c1c1c; white-space: nowrap; }
th:first-child { padding-left: 42.500px; text-align: left; }
th i {
  display: inline-block;
  width: 16px;
  height: 34px;
  margin: -4px 0 0 12px;
  vertical-align: middle;
  background: #d9d9d9;
  clip-path: polygon(50% 0, 100% 46%, 0 46%, 0 54%, 100% 54%, 50% 100%, 0 54%, 0 46%);
}
th:first-child i { margin-left: 113px; }
td { height: 71.050px; padding: 0 22px 5px 0; border-bottom: 2px solid #ddd; font-size: 23.800px; }
td:nth-child(3) { padding-right: 24px; }
td:first-child { padding-left: 23.500px; text-align: left; }
tbody tr:nth-child(odd) { background: #f9f9f9; }
tbody tr:last-child td { border-bottom: 3px solid #1c1c1c; }
.info { margin-top: 10.500px; line-height: 36px; font-size: 24.300px; }
.pager { display: flex; gap: 5.600px; margin-top: 7.500px; padding-left: 230.400px; line-height: 58px; text-align: center; }
.pager span { flex: none; width: 64px; height: 63.300px; border: 2px solid transparent; white-space: nowrap; }
.pager .cur { border-color: #979797; border-radius: 3px; background: linear-gradient(#fff, #dcdcdc); }
.pager .prev { width: 122px; text-align: left; color: #666; border-left: 0; }
.pager .dots { width: 59.200px; letter-spacing: 2px; }
.pager .last { width: 89.600px; }
.pager .next { width: 90px; text-align: left; padding-left: 17px; }

.chart { width: 2081.200px; height: 896.400px; }
.chart g * { vector-effect: non-scaling-stroke; }
.grid { stroke: #ededed; stroke-width: 3; fill: none; }
.tick { stroke: #555; stroke-width: 2.500; fill: none; }
.frame { stroke: #8a8a8a; stroke-width: 3.500; fill: none; }
.line { fill: none; stroke-width: 17.500; stroke-linecap: round; stroke-linejoin: round; }
.line.o { stroke: #de9b2b; }
.line.g { stroke: #67a660; }
.line.r { stroke: #c04c3d; }
.axis text { font-family: "Open Sans", sans-serif; font-size: 42px; text-anchor: end; fill: #444; }

.tabs-card { height: 1001.700px; }
.tabs { display: flex; height: 96.700px; border-bottom: 2.500px solid #f4f4f4; line-height: 93px; font-size: 28.500px; white-space: nowrap; }
.tabs a { margin-right: 86.500px; }
.tabs .active {
  flex: none;
  width: 289.800px;
  height: 96.700px;
  margin-right: 49.500px;
  padding-left: 38px;
  border-top: 7px solid #5d8cb9;
  border-right: 2px solid #f4f4f4;
  background: #fff;
  line-height: 79px;
}
.strip { height: 142.600px; font-size: 42.250px; line-height: 147px; }
.strip a { margin-right: 123.800px; }
.strip .active { width: 412.400px; height: 142.600px; margin-right: 67.500px; padding-left: 40px; border-top-width: 3px; line-height: 141px; }

.map { width: 3161px; height: 905px; }
.g-major { stroke: #ebebeb; stroke-width: 5; }
.g-minor { stroke: #f3f3f3; stroke-width: 3.500; }
.land * { vector-effect: non-scaling-stroke; stroke: #bebebe; stroke-width: 4.400; stroke-linejoin: round; }
.land .b { stroke: none; }
.land .n { fill: #bebebe; }
.land .k { fill: #fff; stroke-width: 2; }
.land .lesotho { fill: #e4d8d6; }
.land .l, .land .dot { fill: none; stroke-width: 4; }
.land .w { stroke-width: 8.500; }
.land .dot { stroke-width: 4.600; stroke-linecap: square; }
.f0 { fill: #fff; }
.f1 { fill: #f4dfd1; }
.f2 { fill: #e8b9a1; }
.f3 { fill: #df9173; }
.f4 { fill: #d8694b; }
.f5 { fill: #cf3d30; }
.f6 { fill: #ab2023; }
.f7 { fill: #821811; }
.maptext { font-family: "Liberation Sans", Arial, sans-serif; fill: #333; }
.maptext .end { text-anchor: end; }
.maptext .mid { text-anchor: middle; }
.t1 { font-size: 45.300px; }
.ax { font-size: 35.500px; fill: #666; }
.cap { font-size: 36px; }
.keys rect { stroke: #c4bcb8; stroke-width: 5; }
.kt { font-size: 34px; fill: #444; }
.kt .s { font-size: 24px; }
```
